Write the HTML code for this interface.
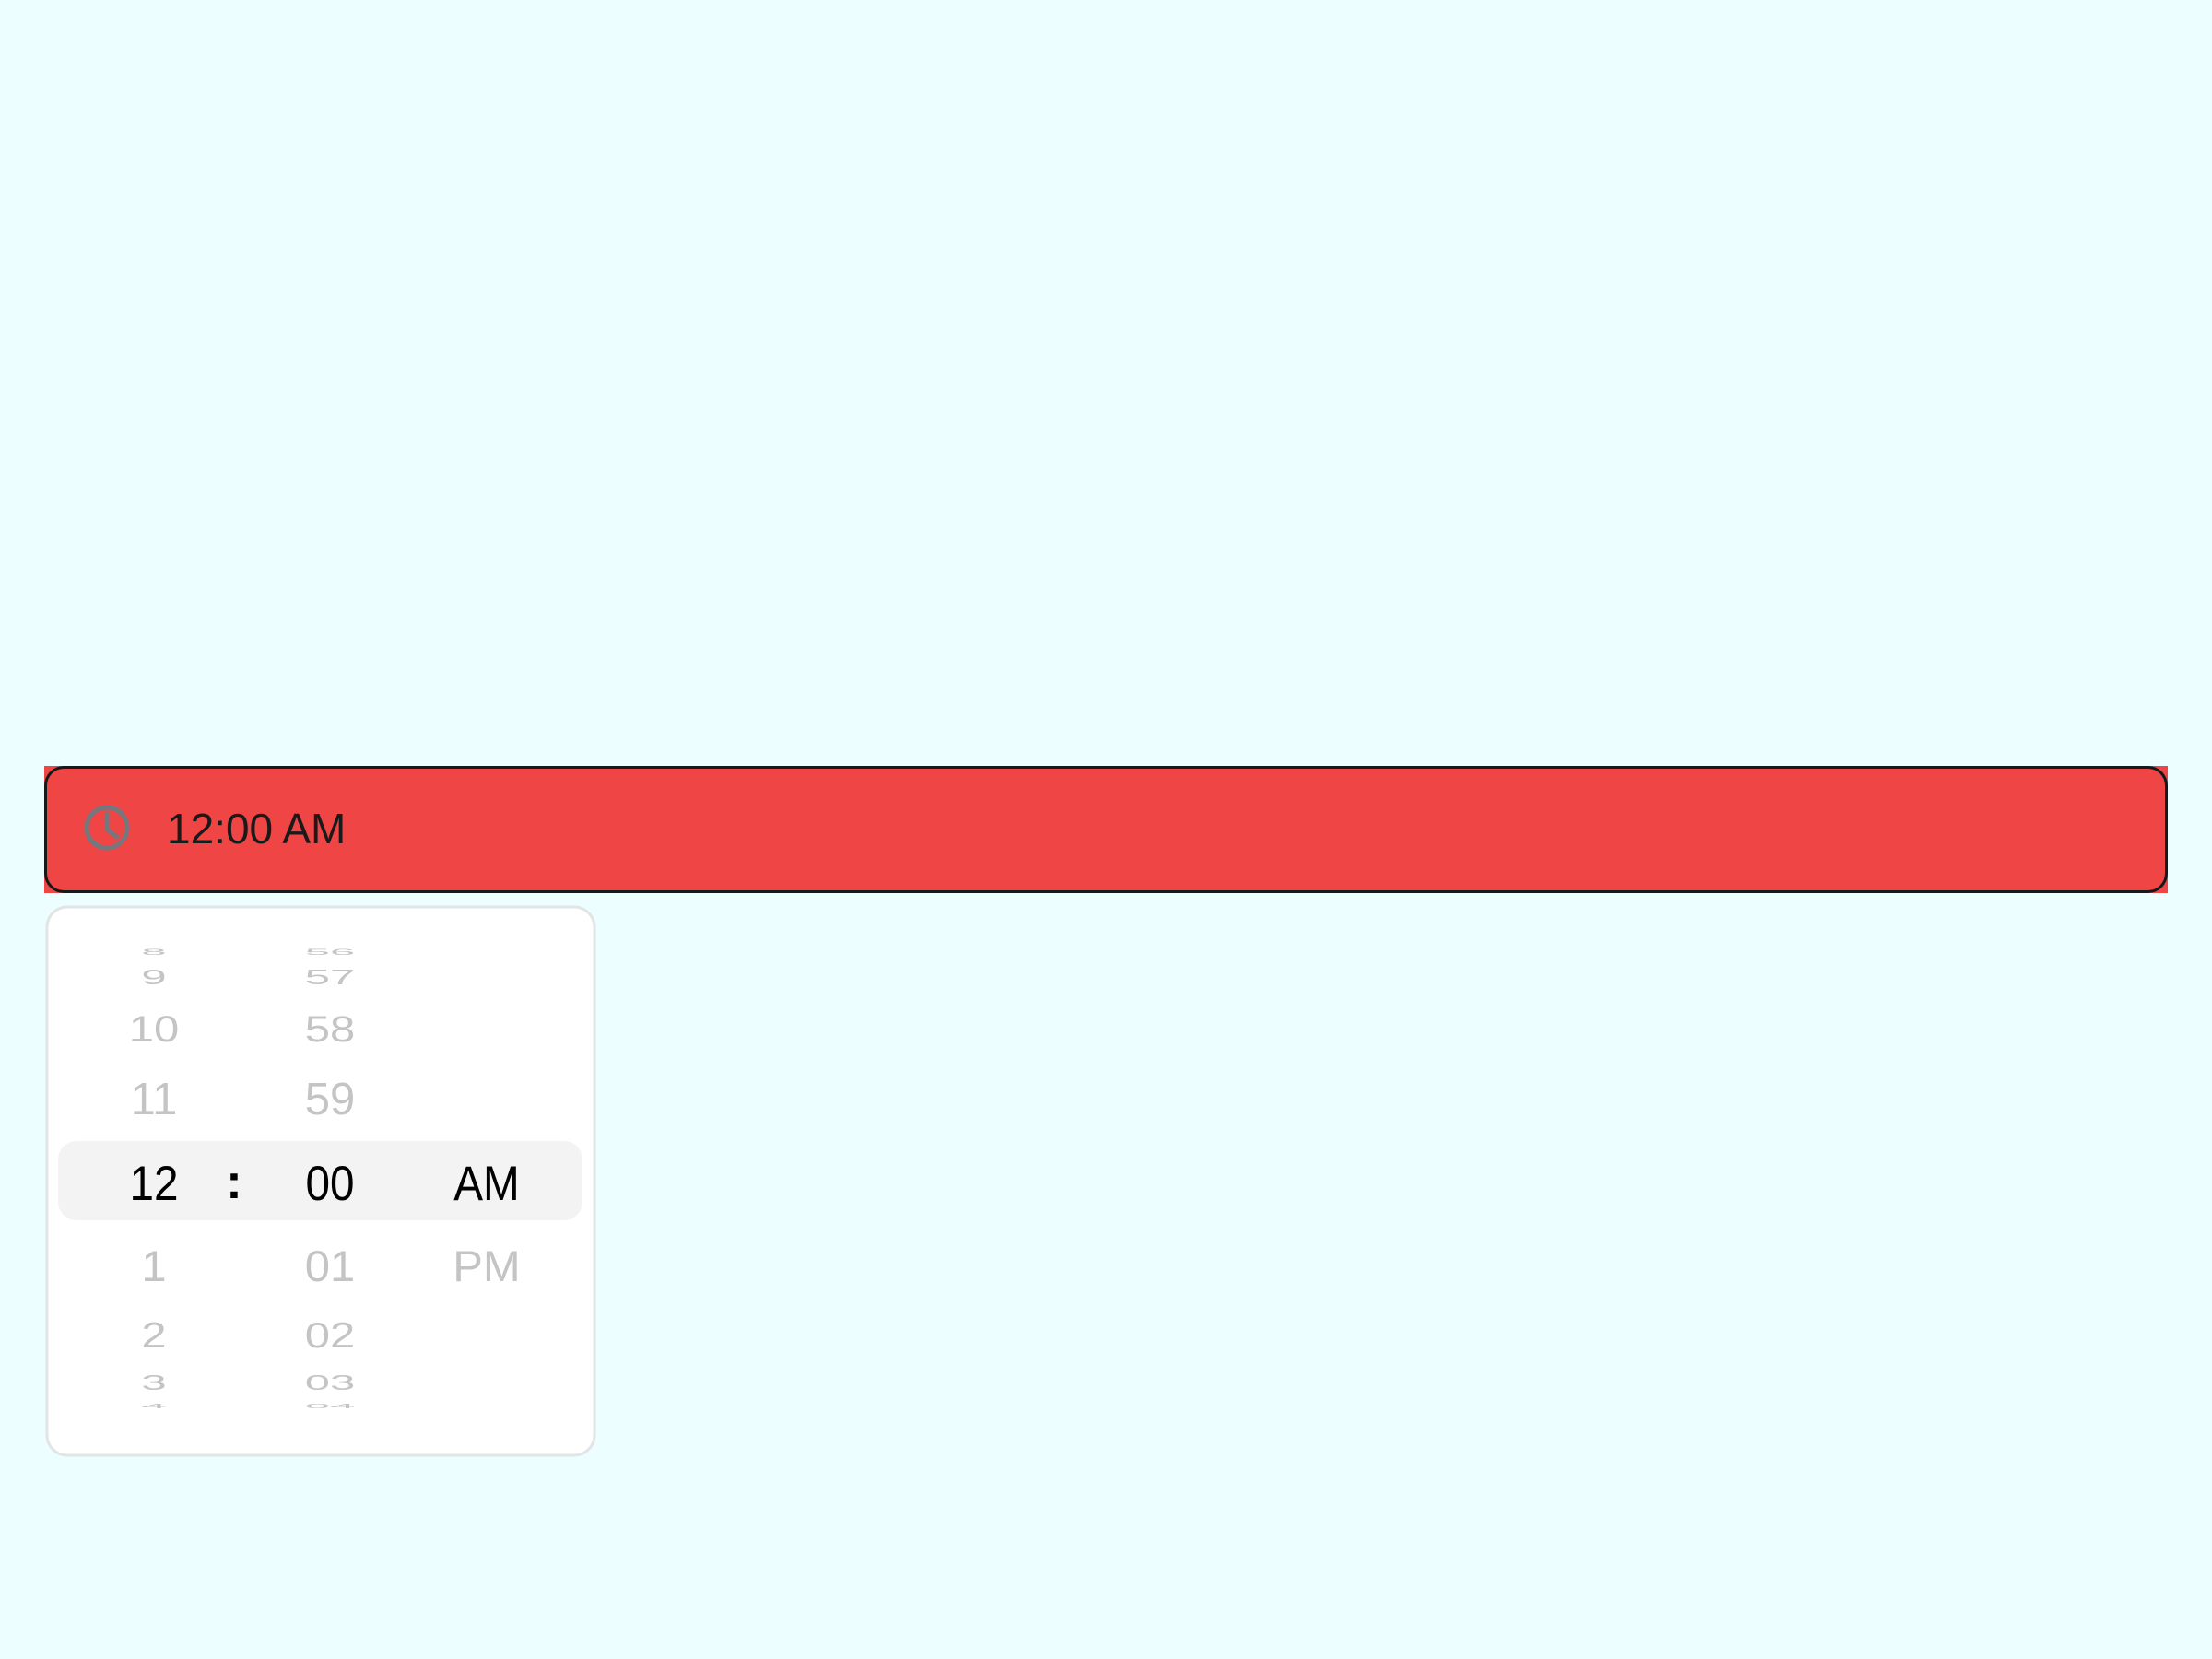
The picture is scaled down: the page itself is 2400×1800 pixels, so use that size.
<!DOCTYPE html>
<html><head><meta charset="utf-8"><style>
html,body{margin:0;padding:0;background:#ecfeff;width:2400px;height:1800px;overflow:hidden}
svg{position:absolute;left:0;top:0}
</style></head><body>
<svg width="2400" height="1800" viewBox="0 0 2400 1800" font-family="Liberation Sans, sans-serif">
<rect x="48" y="831" width="2304" height="138" fill="#ef4545"/>
<rect x="49.5" y="832.5" width="2301" height="135" rx="20" fill="none" stroke="#16191a" stroke-width="3"/>
<circle cx="116" cy="898" r="22" fill="none" stroke="#76777e" stroke-width="5"/>
<path d="M116 883 V900 L127 908" fill="none" stroke="#76777e" stroke-width="5" stroke-linecap="round" stroke-linejoin="round"/>
<text x="181" y="915" font-size="46" fill="#1a1a1a">12:00 AM</text>

<rect x="51" y="984" width="594" height="595" rx="22" fill="#fff" stroke="#e3e4e6" stroke-width="3"/>
<rect x="63" y="1238" width="569" height="86" rx="20" fill="#f3f3f3"/>

<g fill="#c4c4c4" font-size="49" text-anchor="middle">
<text transform="translate(167,1036) scale(1,0.19)">8</text>
<text transform="translate(358,1036) scale(1,0.19)">56</text>
<text transform="translate(167,1068) scale(1,0.48)">9</text>
<text transform="translate(358,1068) scale(1,0.48)">57</text>
<text transform="translate(167,1130) scale(1,0.82)">10</text>
<text transform="translate(358,1130) scale(1,0.82)">58</text>
<text transform="translate(167,1209)">11</text>
<text transform="translate(358,1209)">59</text>
<text transform="translate(167,1390) scale(1,0.97)">1</text>
<text transform="translate(358,1390) scale(1,0.97)">01</text>
<text transform="translate(528,1390) scale(1,0.97)">PM</text>
<text transform="translate(167,1462) scale(1,0.79)">2</text>
<text transform="translate(358,1462) scale(1,0.79)">02</text>
<text transform="translate(167,1508) scale(1,0.48)">3</text>
<text transform="translate(358,1508) scale(1,0.48)">03</text>
<text transform="translate(167,1528) scale(1,0.15)">4</text>
<text transform="translate(358,1528) scale(1,0.15)">04</text>
</g>
<g fill="#000" font-size="53" text-anchor="middle">
<text transform="translate(167,1302) scale(0.9,1)">12</text>
<text transform="translate(254,1300)" font-weight="bold">:</text>
<text transform="translate(358,1302) scale(0.9,1)">00</text>
<text transform="translate(528,1302) scale(0.9,1)">AM</text>
</g>
</svg>
</body></html>
